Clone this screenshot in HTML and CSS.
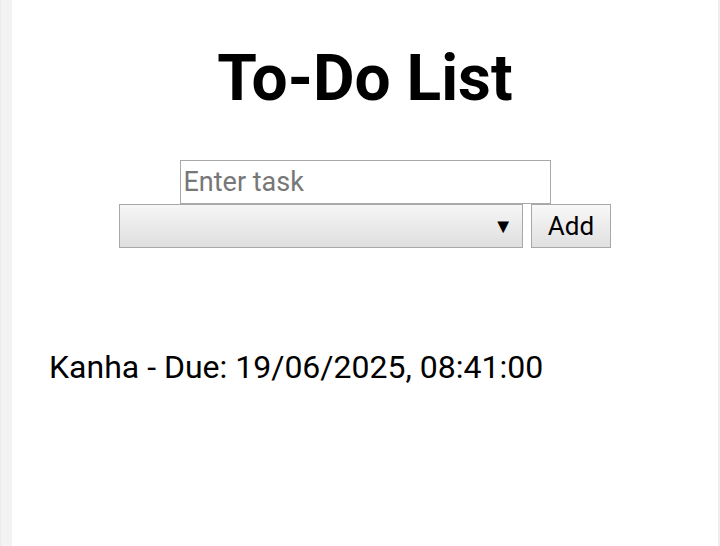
FILE: index.html
```html
<!DOCTYPE html>
<html>
<head>
<meta charset="utf-8">
<link rel="stylesheet" href="styles.css">
</head>
<body>
<div class="page">
  <div class="strip-left"></div>
  <main class="main">
    <h1 class="title">To-Do List</h1>
    <div class="form">
      <input class="task-input" type="text" placeholder="Enter task">
      <div class="row">
        <div class="select"><span class="arrow">▼</span></div>
        <button class="add-btn">Add</button>
      </div>
    </div>
    <ul class="list">
      <li>Kanha - Due: 19/06/2025, 08:41:00</li>
    </ul>
  </main>
  <div class="strip-right"></div>
</div>
</body>
</html>
```

FILE: styles.css
```css
html, body {
  margin: 0;
  padding: 0;
  height: 100%;
  background: #ffffff;
  font-family: Roboto, "Liberation Sans", sans-serif;
}
.page {
  display: flex;
  height: 546px;
}
.strip-left {
  width: 11px;
  background: #f3f3f3;
  border-left: 1px solid #ebebeb;
}
.strip-right {
  width: 2px;
  background: #eeeeee;
}
.main {
  flex: 1;
  display: flex;
  flex-direction: column;
  align-items: center;
}
.title {
  margin: 44px 0 0 0;
  font-size: 64px;
  font-weight: 700;
  line-height: 70px;
  color: #000;
}
.form {
  margin-top: 46px;
  display: flex;
  flex-direction: column;
  align-items: center;
}
.task-input {
  box-sizing: border-box;
  width: 371px;
  height: 44px;
  margin: 0;
  padding: 0 3px;
  border: 1px solid #aaaaaa;
  font-family: Roboto, sans-serif;
  font-size: 27px;
  color: #000;
  background: #fff;
}
.task-input::placeholder {
  color: #777777;
}
.row {
  display: flex;
  gap: 8px;
}
.select {
  box-sizing: border-box;
  width: 404px;
  height: 44px;
  border: 1px solid #a8a8a8;
  background: linear-gradient(#f6f6f6, #dedede);
  display: flex;
  align-items: center;
  justify-content: flex-end;
  padding-right: 9px;
}
.arrow {
  font-size: 20px;
  color: #000;
}
.add-btn {
  box-sizing: border-box;
  width: 80px;
  height: 44px;
  margin: 0;
  border: 1px solid #a8a8a8;
  border-radius: 0;
  background: linear-gradient(#f8f8f8, #e0e0e0);
  font-family: Roboto, sans-serif;
  font-size: 26px;
  color: #000;
  padding: 0;
}
.list {
  align-self: stretch;
  list-style: none;
  margin: 100px 0 0 0;
  padding: 0 0 0 37px;
  font-size: 32px;
  color: #000;
}
```
